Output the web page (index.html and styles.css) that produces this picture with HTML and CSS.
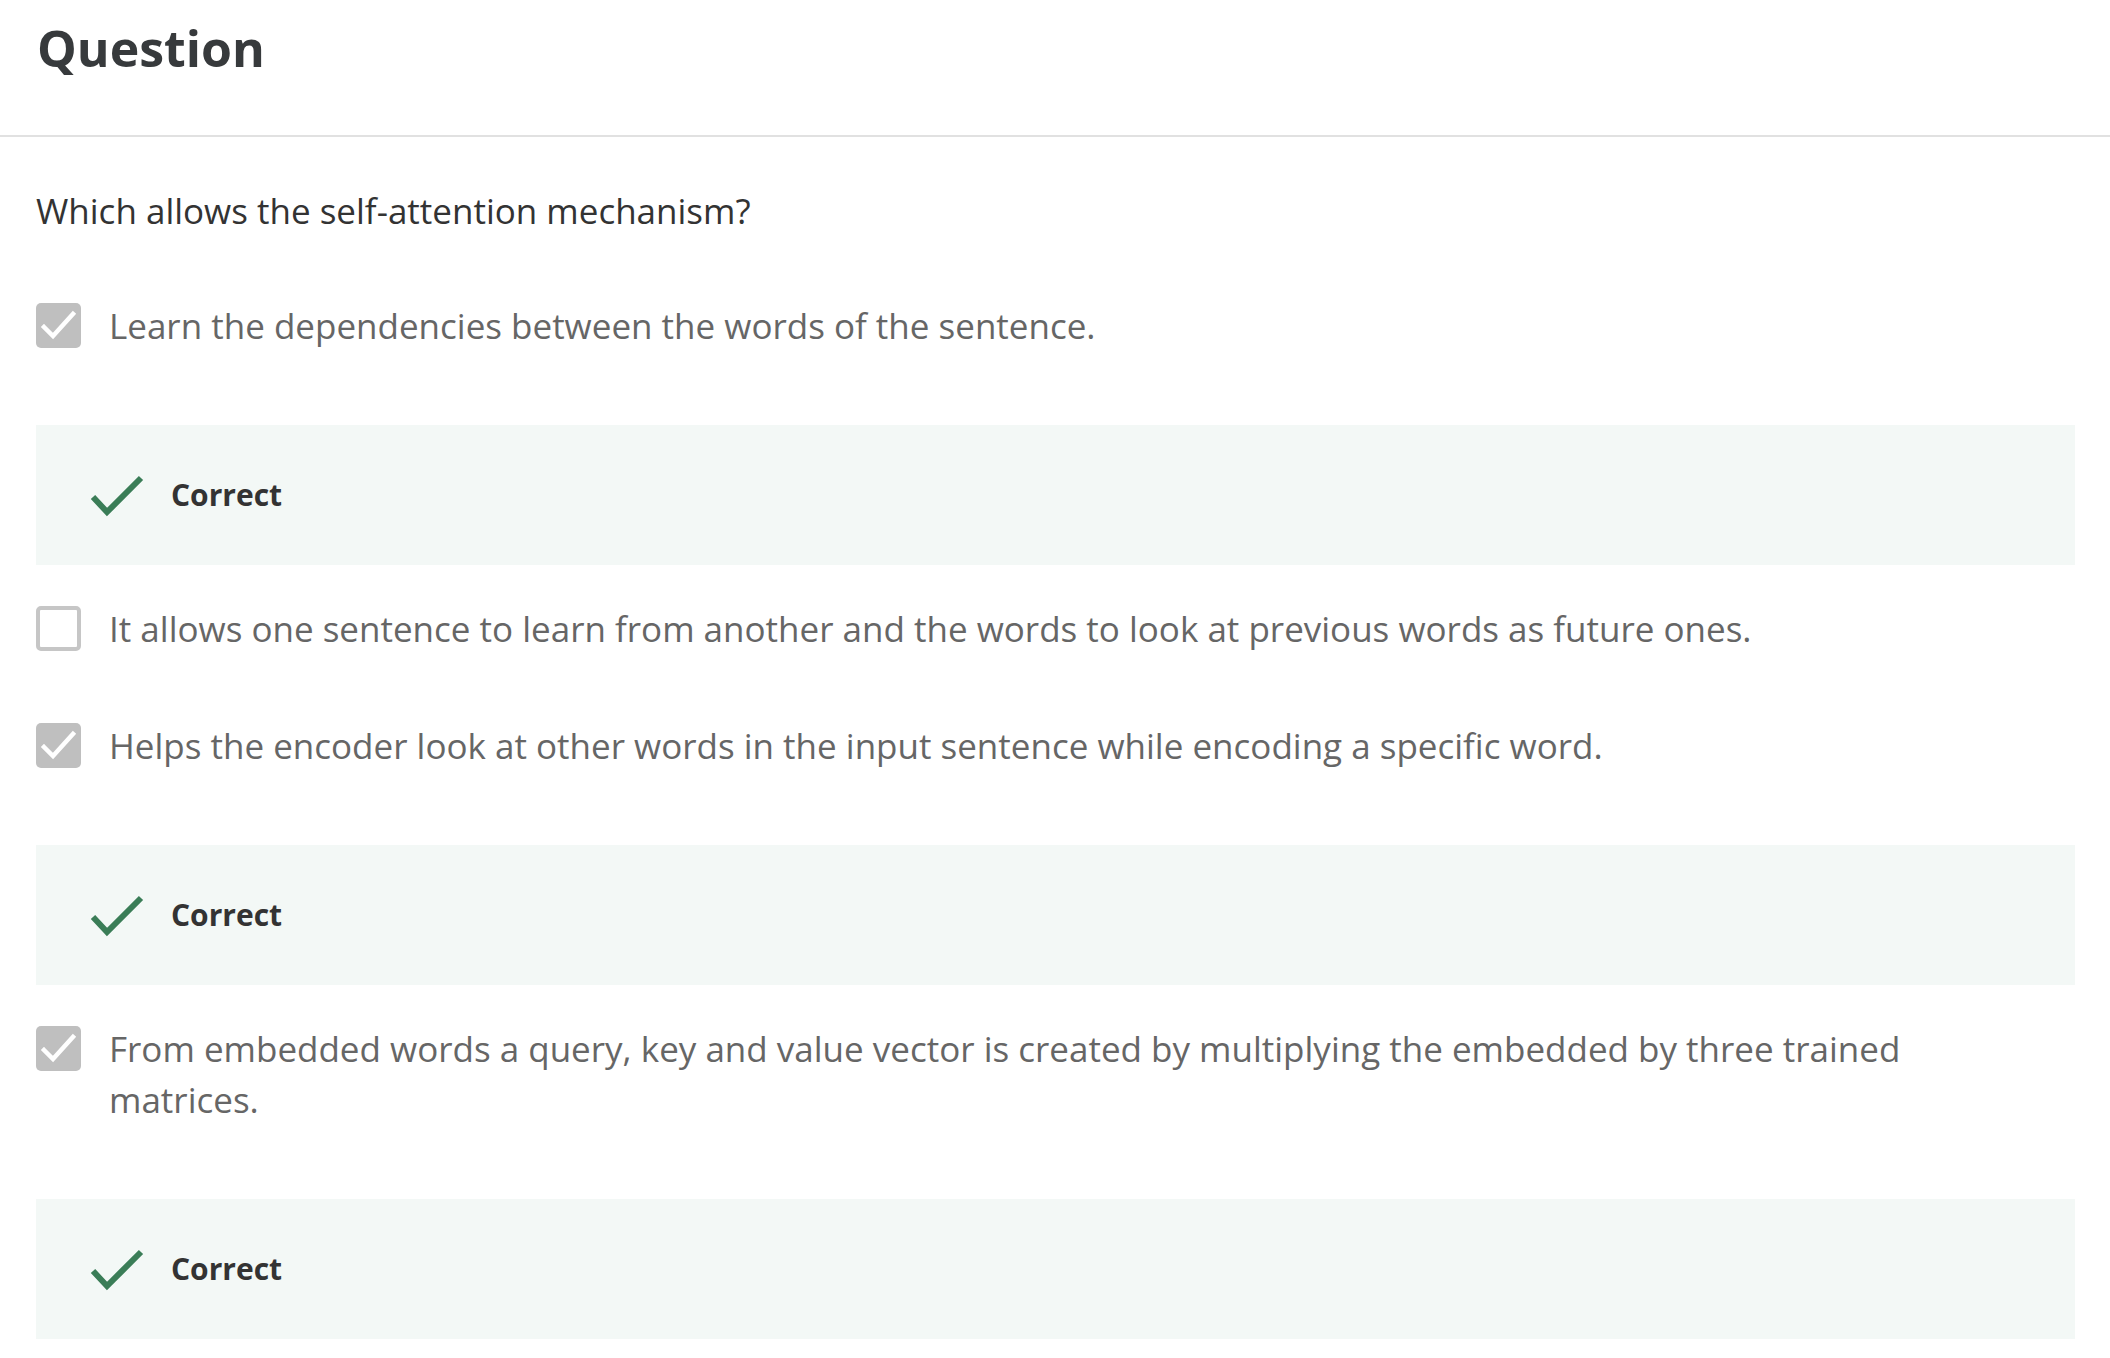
FILE: index.html
```html
<!DOCTYPE html>
<html lang="en">
<head>
<meta charset="utf-8">
<title>Question</title>
<link rel="stylesheet" href="styles.css">
</head>
<body>
<header class="header">
  <h1 class="title">Question</h1>
</header>
<main class="content">
  <p class="prompt">Which allows the self-attention mechanism?</p>

  <div class="option">
    <span class="checkbox checked"><svg viewBox="0 0 45 45" width="45" height="45"><polyline points="8,24 17,33 37,11" fill="none" stroke="#fff" stroke-width="4.5" stroke-linecap="square"/></svg></span>
    <span class="option-text">Learn the dependencies between the words of the sentence.</span>
  </div>
  <div class="feedback">
    <svg class="feedback-icon" viewBox="0 0 54 44" width="54" height="44"><polyline points="3,23 17,38 51,4" fill="none" stroke="#3a7d57" stroke-width="6"/></svg>
    <span class="feedback-text">Correct</span>
  </div>

  <div class="option">
    <span class="checkbox"></span>
    <span class="option-text">It allows one sentence to learn from another and the words to look at previous words as future ones.</span>
  </div>

  <div class="option">
    <span class="checkbox checked"><svg viewBox="0 0 45 45" width="45" height="45"><polyline points="8,24 17,33 37,11" fill="none" stroke="#fff" stroke-width="4.5" stroke-linecap="square"/></svg></span>
    <span class="option-text">Helps the encoder look at other words in the input sentence while encoding a specific word.</span>
  </div>
  <div class="feedback">
    <svg class="feedback-icon" viewBox="0 0 54 44" width="54" height="44"><polyline points="3,23 17,38 51,4" fill="none" stroke="#3a7d57" stroke-width="6"/></svg>
    <span class="feedback-text">Correct</span>
  </div>

  <div class="option">
    <span class="checkbox checked"><svg viewBox="0 0 45 45" width="45" height="45"><polyline points="8,24 17,33 37,11" fill="none" stroke="#fff" stroke-width="4.5" stroke-linecap="square"/></svg></span>
    <span class="option-text">From embedded words a query, key and value vector is created by multiplying the embedded by three trained matrices.</span>
  </div>
  <div class="feedback">
    <svg class="feedback-icon" viewBox="0 0 54 44" width="54" height="44"><polyline points="3,23 17,38 51,4" fill="none" stroke="#3a7d57" stroke-width="6"/></svg>
    <span class="feedback-text">Correct</span>
  </div>
</main>
</body>
</html>
```
FILE: styles.css
```css
html, body {
  margin: 0;
  padding: 0;
  background: #ffffff;
}

body {
  font-family: "Open Sans", "Noto Sans", "Liberation Sans", sans-serif;
  color: #333333;
}

.header {
  height: 135px;
  border-bottom: 2px solid #e1e1e1;
  padding: 0 37px;
  box-sizing: content-box;
}

.title {
  margin: 0;
  padding-top: 16px;
  font-size: 50px;
  line-height: 64px;
  font-weight: 700;
  color: #373a3c;
}

.content {
  padding: 50px 35px 20px 36px;
}

.prompt {
  margin: 0 0 65px 0;
  font-size: 35px;
  line-height: 48px;
  color: #333333;
}

.option {
  display: flex;
  align-items: flex-start;
  gap: 28px;
  margin-bottom: 66px;
}

.checkbox {
  flex: 0 0 auto;
  width: 45px;
  height: 45px;
  margin-top: 3px;
  box-sizing: border-box;
  border: 4px solid #c6c6c6;
  border-radius: 5px;
  background: #ffffff;
  display: flex;
}

.checkbox.checked {
  border: none;
  background: #bfbfbf;
}

.option-text {
  max-width: 1880px;
  font-size: 35px;
  line-height: 51.5px;
  color: #666666;
}

.feedback {
  display: flex;
  align-items: center;
  height: 140px;
  margin-top: 73px;
  margin-bottom: 38px;
  padding-left: 54px;
  background: #f3f8f6;
}

.feedback-icon {
  flex: 0 0 auto;
  margin-top: 3px;
}

.feedback-text {
  margin-left: 27px;
  font-size: 30px;
  font-weight: 700;
  color: #333333;
}
```
